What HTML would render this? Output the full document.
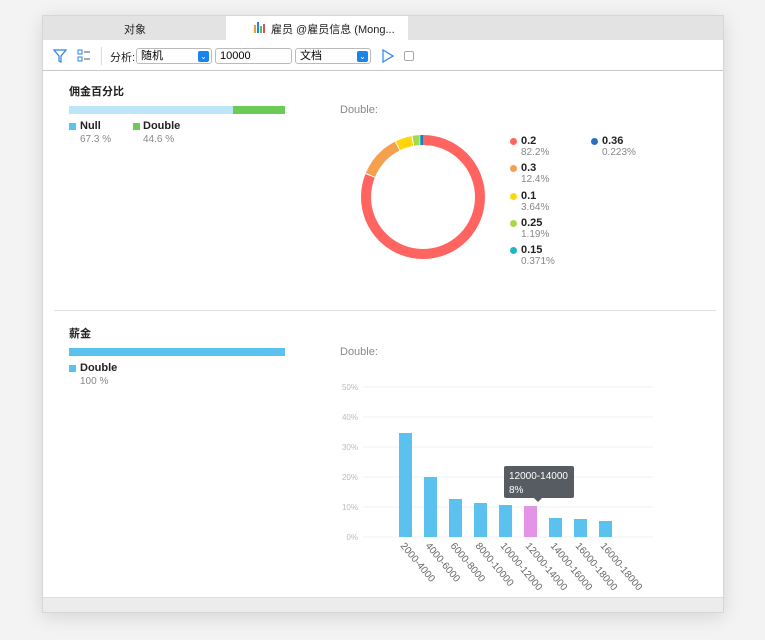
<!DOCTYPE html><html><head><meta charset="utf-8"><style>
*{margin:0;padding:0;box-sizing:border-box}
body{width:765px;height:640px;background:#f3f3f3;font-family:"Liberation Sans","Noto Sans CJK SC",sans-serif;position:relative;overflow:hidden}
.a{position:absolute}
.win{left:42px;top:15px;width:682px;height:598px;background:#fff;border:1px solid #d6d6d6;box-shadow:0 4px 18px rgba(0,0,0,.12)}
.t{font-size:11px;color:#222}
.g{font-size:10px;color:#888}
.sq{width:7px;height:7px}
.dot{width:7px;height:7px;border-radius:50%}
.sel{height:16px;border:1px solid #bbb;border-radius:3px;font-size:11px;padding-left:4px;line-height:14px;background:#fff}
.chk{width:11px;height:11px;background:#1a84ee;border-radius:2px;color:#fff;font-size:8px;line-height:11px;text-align:center}
.lb{font-weight:600}
</style></head><body>
<div class="a win"></div>
<div class="a" style="left:43px;top:16px;width:680px;height:24px;background:#e3e3e3"></div>
<div class="a" style="left:226px;top:16px;width:182px;height:24px;background:#fff"></div>
<div class="a t" style="left:124px;top:21px">对象</div>
<svg class="a" style="left:254px;top:21px" width="13" height="12"><rect x="0" y="4" width="2" height="8" fill="#f0a030"/><rect x="3" y="1" width="2" height="11" fill="#2a7de1"/><rect x="6" y="5" width="2" height="7" fill="#5bc04a"/><rect x="9" y="3" width="2" height="9" fill="#e05050"/></svg>
<div class="a t" style="left:271px;top:21px">雇员 @雇员信息 (Mong...</div>
<div class="a" style="left:43px;top:70px;width:680px;height:1px;background:#c8c8c8"></div>
<svg class="a" style="left:53px;top:49px" width="14" height="14"><path d="M1 1H13L8 7V13L6 12V7Z" fill="none" stroke="#2a84e6" stroke-width="1.2"/></svg>
<svg class="a" style="left:77px;top:49px" width="14" height="14"><rect x="1" y="1" width="4" height="4" fill="none" stroke="#2a84e6"/><rect x="1" y="8" width="4" height="4" fill="none" stroke="#2a84e6"/><path d="M7 3H13M7 10H13" stroke="#555"/></svg>
<div class="a" style="left:101px;top:47px;width:1px;height:18px;background:#ddd"></div>
<div class="a t" style="left:110px;top:49px">分析:</div>
<div class="a sel" style="left:136px;top:48px;width:76px">随机<div class="a chk" style="right:2px;top:2px">⌄</div></div>
<div class="a sel" style="left:215px;top:48px;width:77px">10000</div>
<div class="a sel" style="left:295px;top:48px;width:76px">文档<div class="a chk" style="right:2px;top:2px">⌄</div></div>
<svg class="a" style="left:382px;top:49px" width="12" height="14"><path d="M1 1L11 7L1 13Z" fill="none" stroke="#2a84e6" stroke-width="1.2"/></svg>
<div class="a" style="left:404px;top:51px;width:10px;height:10px;border:1px solid #aaa;border-radius:2px"></div>

<div class="a t" style="left:69px;top:83px;font-weight:bold">佣金百分比</div>
<div class="a" style="left:69px;top:106px;width:164px;height:8px;background:#bde6f8"></div>
<div class="a" style="left:233px;top:106px;width:52px;height:8px;background:#6bcb55"></div>
<div class="a sq" style="left:69px;top:123px;background:#5bc2f0"></div>
<div class="a t" style="left:80px;top:120px;font-weight:bold">Null</div>
<div class="a g" style="left:80px;top:134px">67.3 %</div>
<div class="a sq" style="left:133px;top:123px;background:#6bcb55"></div>
<div class="a t" style="left:143px;top:120px;font-weight:bold">Double</div>
<div class="a g" style="left:143px;top:134px">44.6 %</div>
<div class="a g" style="left:340px;top:104px;font-size:11px">Double:</div>

<svg class="a" style="left:361px;top:135px" width="124" height="124" viewBox="0 0 124 124">
<g transform="rotate(-90 62 62)" fill="none" stroke-width="10">
<circle cx="62" cy="62" r="57" stroke="#ff6460" stroke-dasharray="290 400" stroke-dashoffset="0"/>
<circle cx="62" cy="62" r="57" stroke="#f5a04f" stroke-dasharray="40 400" stroke-dashoffset="-291"/>
<circle cx="62" cy="62" r="57" stroke="#ffd60a" stroke-dasharray="15 400" stroke-dashoffset="-332"/>
<circle cx="62" cy="62" r="57" stroke="#a6d84a" stroke-dasharray="6 400" stroke-dashoffset="-348"/>
<circle cx="62" cy="62" r="57" stroke="#1ab8c8" stroke-dasharray="2.5 400" stroke-dashoffset="-354.5"/>
<circle cx="62" cy="62" r="57" stroke="#2a6fc0" stroke-dasharray="2 400" stroke-dashoffset="-356"/>
</g></svg>

<div class="a dot" style="left:510px;top:138px;background:#ff6460"></div><div class="a t lb" style="left:521px;top:135px">0.2</div><div class="a g" style="left:521px;top:147px">82.2%</div>
<div class="a dot" style="left:510px;top:165px;background:#f5a04f"></div><div class="a t lb" style="left:521px;top:162px">0.3</div><div class="a g" style="left:521px;top:174px">12.4%</div>
<div class="a dot" style="left:510px;top:193px;background:#ffd60a"></div><div class="a t lb" style="left:521px;top:190px">0.1</div><div class="a g" style="left:521px;top:202px">3.64%</div>
<div class="a dot" style="left:510px;top:220px;background:#a6d84a"></div><div class="a t lb" style="left:521px;top:217px">0.25</div><div class="a g" style="left:521px;top:229px">1.19%</div>
<div class="a dot" style="left:510px;top:247px;background:#1ab8c8"></div><div class="a t lb" style="left:521px;top:244px">0.15</div><div class="a g" style="left:521px;top:256px">0.371%</div>
<div class="a dot" style="left:591px;top:138px;background:#2a6fc0"></div><div class="a t lb" style="left:602px;top:135px">0.36</div><div class="a g" style="left:602px;top:147px">0.223%</div>

<div class="a" style="left:54px;top:310px;width:662px;height:1px;background:#e0e0e0"></div>
<div class="a t" style="left:69px;top:325px;font-weight:bold">薪金</div>
<div class="a" style="left:69px;top:348px;width:216px;height:8px;background:#5bc2f0"></div>
<div class="a sq" style="left:69px;top:365px;background:#5bc2f0"></div>
<div class="a t" style="left:80px;top:362px;font-weight:bold">Double</div>
<div class="a g" style="left:80px;top:376px">100 %</div>
<div class="a g" style="left:340px;top:346px;font-size:11px">Double:</div>

<svg class="a" style="left:330px;top:370px" width="340" height="230" font-family="Liberation Sans, sans-serif">
<g stroke="#f2f2f2"><path d="M33 17H323M33 47H323M33 77H323M33 107H323M33 137H323M33 167H323"/></g>
<g fill="#bbb" font-size="8" text-anchor="end"><text x="28" y="20">50%</text><text x="28" y="50">40%</text><text x="28" y="80">30%</text><text x="28" y="110">20%</text><text x="28" y="140">10%</text><text x="28" y="170">0%</text></g>
<g fill="#5bc2f0"><rect x="69" y="63" width="13" height="104"/><rect x="94" y="107" width="13" height="60"/><rect x="119" y="129" width="13" height="38"/><rect x="144" y="133" width="13" height="34"/><rect x="169" y="135" width="13" height="32"/><rect x="219" y="148" width="13" height="19"/><rect x="244" y="149" width="13" height="18"/><rect x="269" y="151" width="13" height="16"/></g>
<rect x="194" y="136" width="13" height="31" fill="#e394e6"/>
<g fill="#666" font-size="10">
<text transform="translate(70 176) rotate(50)">2000-4000</text>
<text transform="translate(95 176) rotate(50)">4000-6000</text>
<text transform="translate(120 176) rotate(50)">6000-8000</text>
<text transform="translate(145 176) rotate(50)">8000-10000</text>
<text transform="translate(170 176) rotate(50)">10000-12000</text>
<text transform="translate(195 176) rotate(50)">12000-14000</text>
<text transform="translate(220 176) rotate(50)">14000-16000</text>
<text transform="translate(245 176) rotate(50)">16000-18000</text>
<text transform="translate(270 176) rotate(50)">16000-18000</text>
</g>
<rect x="174" y="96" width="70" height="32" rx="2" fill="#575c62"/>
<path d="M204 128L208 132L212 128Z" fill="#575c62"/>
<text x="179" y="109" fill="#fff" font-size="10">12000-14000</text>
<text x="179" y="123" fill="#fff" font-size="10">8%</text>
</svg>
<div class="a" style="left:43px;top:597px;width:680px;height:15px;background:#ececec;border-top:1px solid #ddd"></div>
</body></html>
